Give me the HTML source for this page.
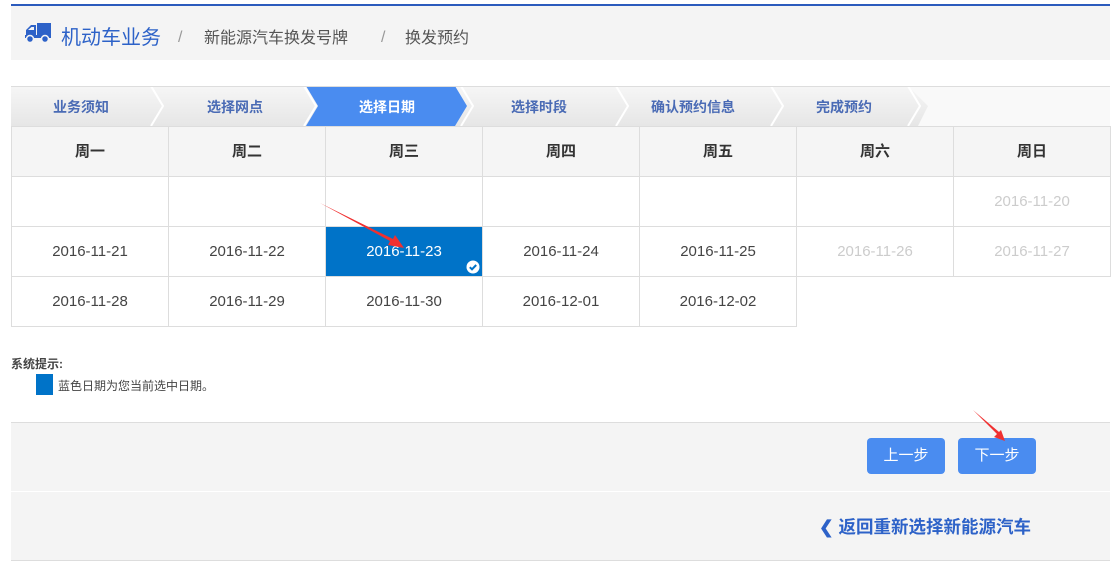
<!DOCTYPE html><html><head><meta charset="utf-8"><style>
body{margin:0;width:1119px;height:569px;background:#fff;font-family:"Liberation Sans","Noto Sans CJK SC",sans-serif;position:relative;overflow:hidden}
.a{position:absolute}
table{border-collapse:collapse;position:absolute;left:11px;top:126px;table-layout:fixed}
td{border:1px solid #ddd;width:156px;height:49px;line-height:20px;text-align:center;font-size:15px;color:#444;padding:0}
th{border:1px solid #ddd;height:49px;line-height:20px;background:#f5f5f5;font-size:15px;color:#333;font-weight:bold;padding:0}
.g{color:#ccc}
.btn{position:absolute;top:438px;width:78px;height:36px;background:#4a8cf0;border-radius:4px;color:#fff;font-size:15px;text-align:center;line-height:36px}
</style></head><body>
<div class="a" style="left:11px;top:4px;width:1099px;height:2px;background:#2b5bbd"></div>
<div class="a" style="left:11px;top:6px;width:1099px;height:54px;background:#f4f4f4"></div>
<svg class="a" style="left:24px;top:22px" width="28" height="22" viewBox="0 0 28 22"><path d="M2 8 L7 3 H12 V15 H2Z M13 1 H27 V15 H13Z" fill="#2d62c8"/><rect x="1" y="13" width="26" height="3" fill="#2d62c8"/><circle cx="6" cy="17" r="3.5" fill="#2d62c8" stroke="#f4f4f4" stroke-width="1.5"/><circle cx="21" cy="17" r="3.5" fill="#2d62c8" stroke="#f4f4f4" stroke-width="1.5"/><path d="M4 8 L7.5 5 H10 V8Z" fill="#f4f4f4"/></svg>
<div class="a" style="left:61px;top:21px;font-size:20px;color:#2d62c8">机动车业务</div>
<div class="a" style="left:178px;top:29px;font-size:16px;color:#999">/</div>
<div class="a" style="left:204px;top:24px;font-size:16px;color:#555">新能源汽车换发号牌</div>
<div class="a" style="left:381px;top:29px;font-size:16px;color:#999">/</div>
<div class="a" style="left:405px;top:24px;font-size:16px;color:#555">换发预约</div>
<svg class="a" style="left:11px;top:86px" width="1099" height="40">
<defs><linearGradient id="gr" x1="0" y1="0" x2="0" y2="1"><stop offset="0" stop-color="#f6f6f6"/><stop offset="1" stop-color="#e6e6e6"/></linearGradient></defs>
<rect width="1099" height="40" fill="url(#gr)"/>
<path d="M897 0 H1099 V40 H907 L917 20Z" fill="#f9f9f9"/>
<path d="M140 0 L152 20 L140 40 M293 0 L305 20 L293 40 M450 0 L462 20 L450 40 M605 0 L617 20 L605 40 M760 0 L772 20 L760 40 M897 0 L909 20 L897 40" stroke="#fff" stroke-width="2" fill="none"/>
<path d="M295 0 H444 L456 20 L444 40 H295 L307 20Z" fill="#4a8cf0"/>
<line x1="0" y1="0.5" x2="1099" y2="0.5" stroke="#ddd"/>
<g font-size="14" font-weight="bold" fill="#4a6bb5" text-anchor="middle"><text x="70" y="26">业务须知</text><text x="224" y="26">选择网点</text><text x="376" y="26" fill="#fff">选择日期</text><text x="528" y="26">选择时段</text><text x="682" y="26">确认预约信息</text><text x="833" y="26">完成预约</text></g>
</svg>
<table>
<tr><th>周一</th><th>周二</th><th>周三</th><th>周四</th><th>周五</th><th>周六</th><th>周日</th></tr>
<tr><td></td><td></td><td></td><td></td><td></td><td></td><td class="g">2016-11-20</td></tr>
<tr><td>2016-11-21</td><td>2016-11-22</td><td style="background:#0073c8;color:#fff;position:relative">2016-11-23<svg style="position:absolute;right:2px;bottom:2px" width="14" height="14"><circle cx="7" cy="7" r="6.5" fill="#fff"/><path d="M3.8 7.2 L6 9.3 L10.2 5" stroke="#0073c8" stroke-width="2" fill="none"/></svg></td><td>2016-11-24</td><td>2016-11-25</td><td class="g">2016-11-26</td><td class="g">2016-11-27</td></tr>
<tr><td>2016-11-28</td><td>2016-11-29</td><td>2016-11-30</td><td>2016-12-01</td><td>2016-12-02</td><td style="border:none"></td><td style="border:none"></td></tr>
</table>
<svg class="a" style="left:318px;top:200px" width="90" height="55"><path d="M2 3 L72 41 L70 45 L86 48 L77 35 L75 39 Z" fill="#f03030"/></svg>
<div class="a" style="left:11px;top:355px;font-size:12px;font-weight:bold;color:#444">系统提示:</div>
<div class="a" style="left:36px;top:374px;width:17px;height:21px;background:#0073c8"></div>
<div class="a" style="left:58px;top:377px;font-size:12px;color:#444">蓝色日期为您当前选中日期。</div>
<div class="a" style="left:11px;top:422px;width:1099px;height:68px;background:#f4f4f4;border-top:1px solid #ddd"></div>
<div class="btn" style="left:867px">上一步</div>
<div class="btn" style="left:958px">下一步</div>
<svg class="a" style="left:970px;top:408px" width="40" height="36"><path d="M3 2 L27 26 L24 29 L35 33 L31 22 L29 24 Z" fill="#f03030"/></svg>
<div class="a" style="left:11px;top:492px;width:1099px;height:68px;background:#f4f4f4;border-bottom:1px solid #ddd"></div>
<div class="a" style="left:819px;top:514px;font-size:17.5px;font-weight:bold;color:#2d62c8">❮ 返回重新选择新能源汽车</div>
</body></html>
